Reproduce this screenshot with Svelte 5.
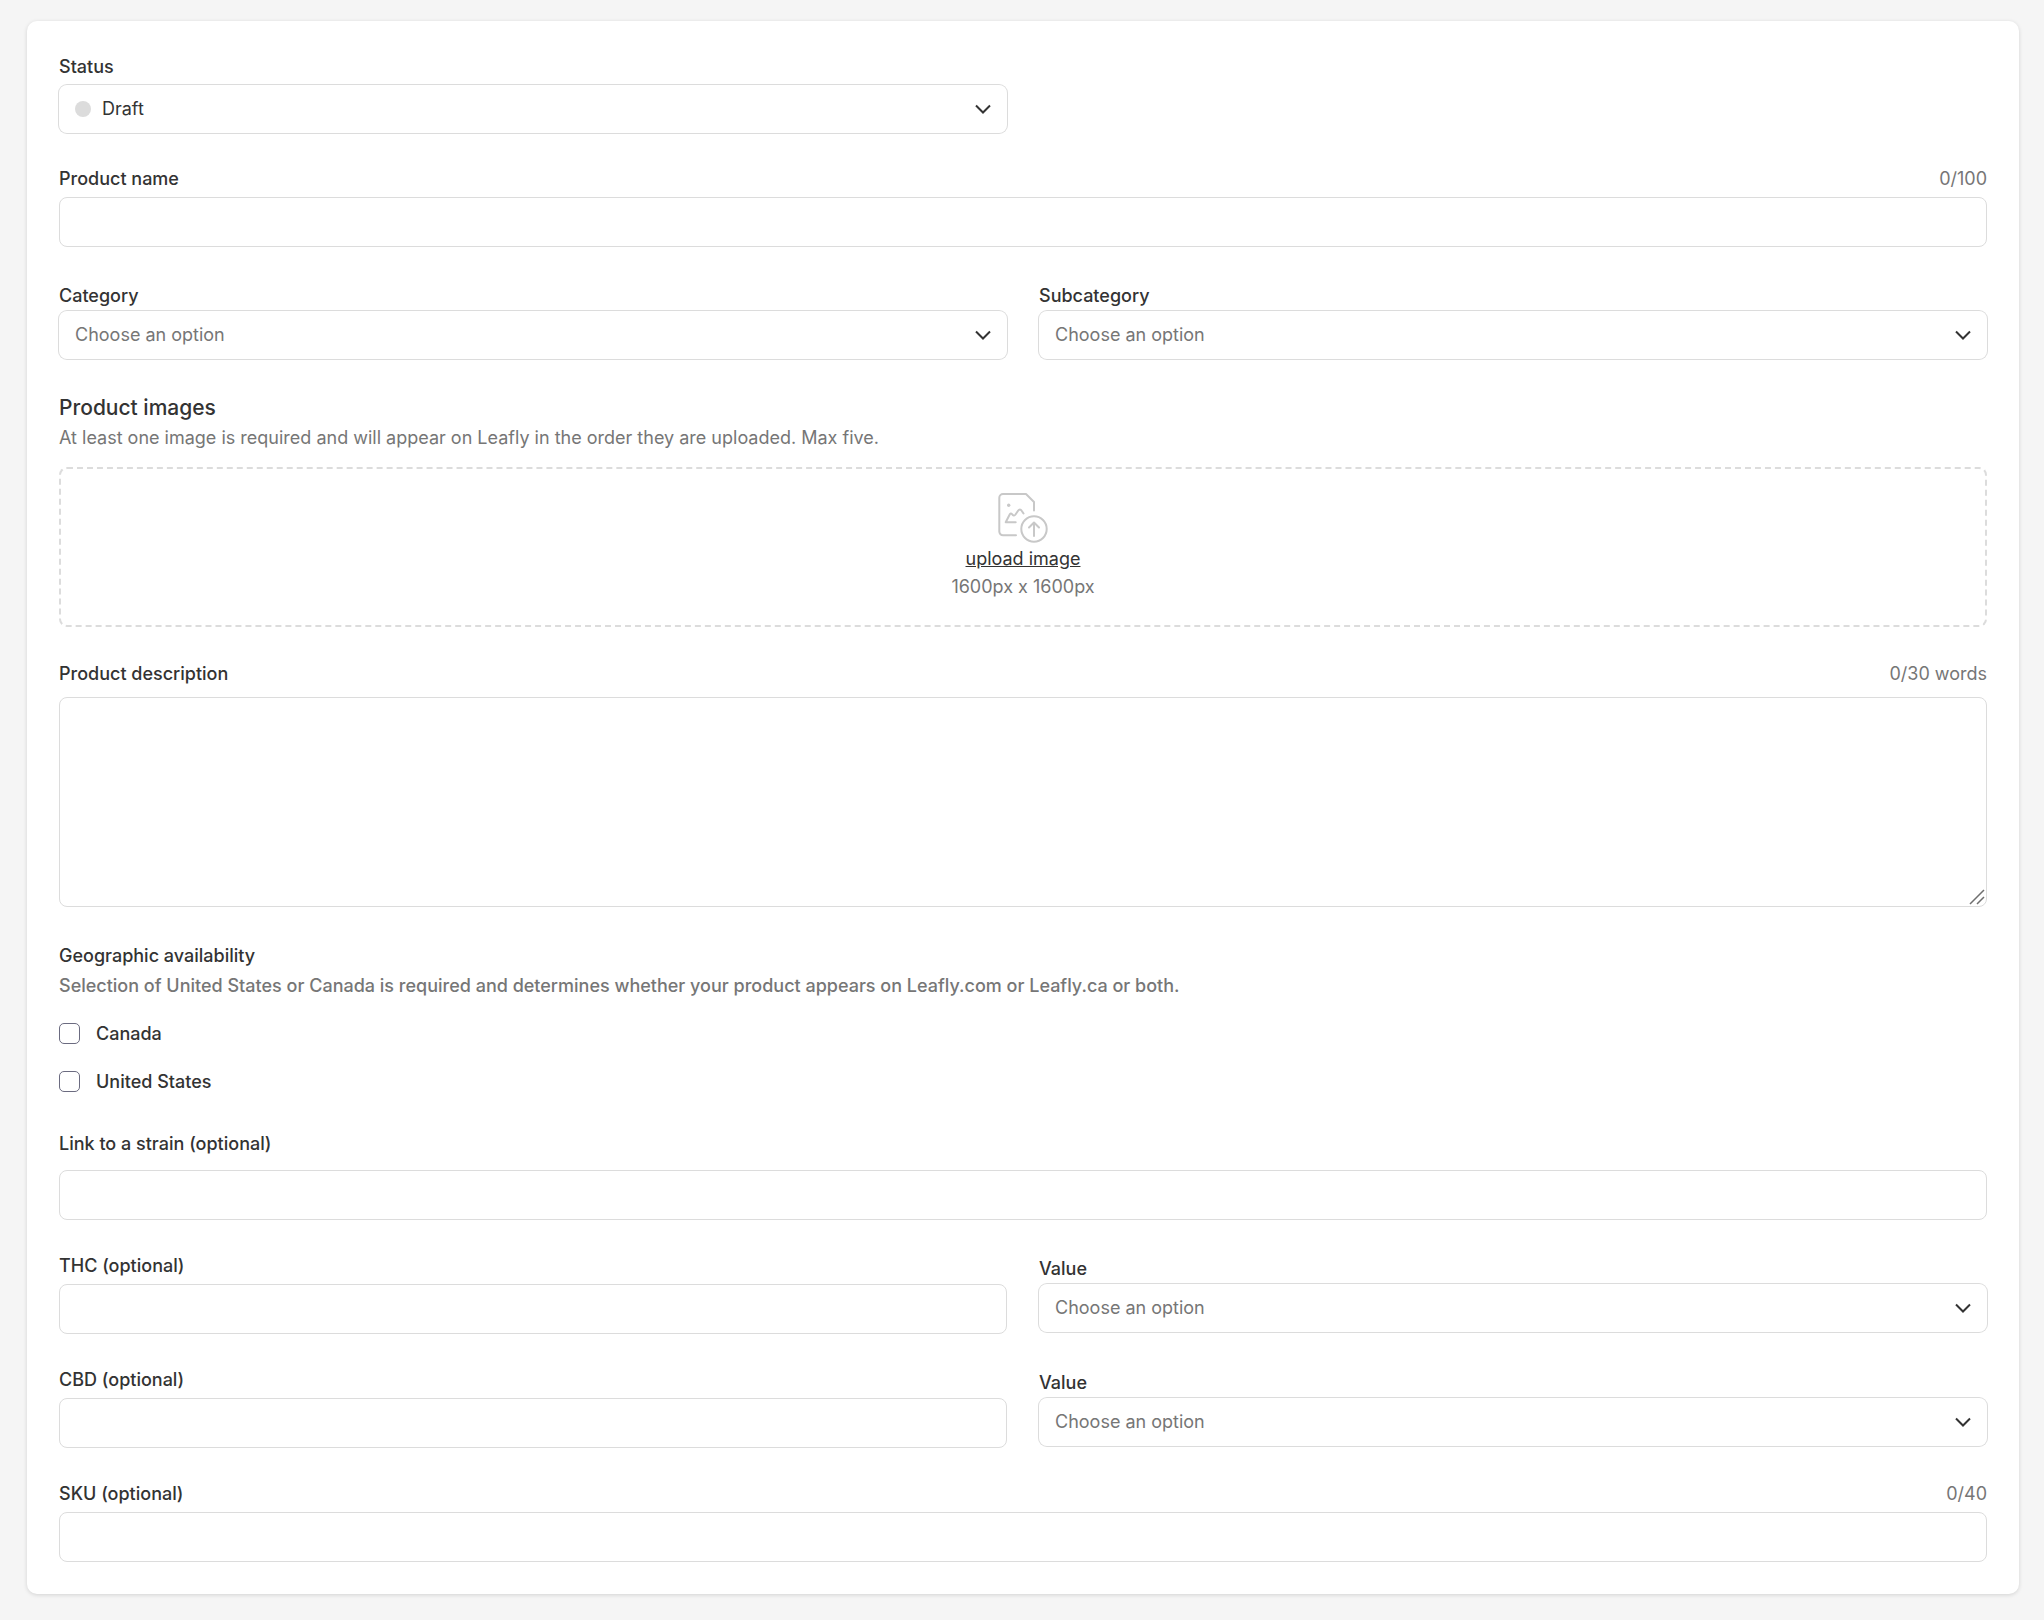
<!--
  ProductForm: create/edit form for a brand product. Holds the listing status,
  naming, category, images, description, availability and potency fields.
-->
<script lang="ts">
	const NAME_MAX = 100;
	const DESCRIPTION_MAX_WORDS = 30;
	const SKU_MAX = 40;

	const statuses = ['Draft', 'Published'];
	const units = ['%', 'mg'];
	const countries = ['Canada', 'United States'];
	const categories: Record<string, string[]> = {
		Flower: ['Pre-rolls', 'Infused flower'],
		Edibles: ['Gummies', 'Chocolates', 'Beverages'],
		Concentrates: ['Live resin', 'Rosin']
	};

	let product = $state({
		status: 'Draft',
		name: '',
		category: '',
		subcategory: '',
		description: '',
		countries: [] as string[],
		strain: '',
		thc: '',
		thcUnit: '',
		cbd: '',
		cbdUnit: '',
		sku: ''
	});
	let fileInput: HTMLInputElement;

	const subcategories = $derived(categories[product.category] ?? []);
	const wordCount = $derived(product.description.split(/\s+/).filter(Boolean).length);
</script>

{#snippet chevron()}
	<svg class="chevron" viewBox="0 0 24 24" aria-hidden="true">
		<path d="M5 8.500l7 7 7-7" />
	</svg>
{/snippet}

<form class="card" onsubmit={(event) => event.preventDefault()}>
	<div class="row">
		<div class="field">
			<label for="status">Status</label>
			<div class="select has-dot">
				<span class="status-dot" class:live={product.status === 'Published'}></span>
				<select id="status" class="chosen" bind:value={product.status}>
					{#each statuses as status}
						<option value={status}>{status}</option>
					{/each}
				</select>
				{@render chevron()}
			</div>
		</div>
	</div>

	<div class="field">
		<div class="label-row">
			<label for="name">Product name</label>
			<span class="counter">{product.name.length}/{NAME_MAX}</span>
		</div>
		<input id="name" type="text" maxlength={NAME_MAX} bind:value={product.name} />
	</div>

	<div class="row">
		<div class="field compact">
			<label for="category">Category</label>
			<div class="select">
				<select
					id="category"
					class:chosen={product.category}
					bind:value={product.category}
					onchange={() => (product.subcategory = '')}
				>
					<option value="">Choose an option</option>
					{#each Object.keys(categories) as category}
						<option value={category}>{category}</option>
					{/each}
				</select>
				{@render chevron()}
			</div>
		</div>
		<div class="field compact">
			<label for="subcategory">Subcategory</label>
			<div class="select">
				<select id="subcategory" class:chosen={product.subcategory} bind:value={product.subcategory}>
					<option value="">Choose an option</option>
					{#each subcategories as subcategory}
						<option value={subcategory}>{subcategory}</option>
					{/each}
				</select>
				{@render chevron()}
			</div>
		</div>
	</div>

	<section>
		<h2>Product images</h2>
		<p class="help">
			At least one image is required and will appear on Leafly in the order they are uploaded. Max five.
		</p>
		<div class="dropzone">
			<svg class="upload-icon" viewBox="0 0 50 52" aria-hidden="true">
				<path d="M18 42.300H5a3.700 3.700 0 0 1-3.700-3.700V4.700A3.700 3.700 0 0 1 5 1h23l8 8v8.500" />
				<path d="M17.700 29.300H7.700l4-7.800c.6-1.200 1.500-1.300 2.300-.4 1.200 1.500 2.400 1.900 3.500.4l2.700-4c1-1.500 2.500-1.500 3.300 0l2 3" />
				<circle cx="36" cy="36" r="12.700" />
				<path d="M36 43V29.500M31 34.500l5-5 5 5" />
				<circle class="sun" cx="10.700" cy="12.300" r="1.700" />
			</svg>
			<button type="button" class="upload" onclick={() => fileInput.click()}>upload image</button>
			<input bind:this={fileInput} type="file" accept="image/*" multiple hidden />
			<span class="dimensions">1600px x 1600px</span>
		</div>
	</section>

	<div class="field roomy">
		<div class="label-row">
			<label for="description">Product description</label>
			<span class="counter">{wordCount}/{DESCRIPTION_MAX_WORDS} words</span>
		</div>
		<div class="textarea">
			<textarea id="description" bind:value={product.description}></textarea>
			<svg class="grip" viewBox="0 0 16 16" aria-hidden="true">
				<path d="M1 15L15 1M8 15l7-7" />
			</svg>
		</div>
	</div>

	<fieldset>
		<legend>Geographic availability</legend>
		<p class="help strong">
			Selection of United States or Canada is required and determines whether your product appears on
			Leafly.com or Leafly.ca or both.
		</p>
		<div class="checks">
			{#each countries as country}
				<label class="check">
					<input type="checkbox" value={country} bind:group={product.countries} />
					{country}
				</label>
			{/each}
		</div>
	</fieldset>

	<div class="field roomy">
		<label class="tall" for="strain">Link to a strain (optional)</label>
		<input id="strain" type="text" bind:value={product.strain} />
	</div>

	<div class="row">
		<div class="field">
			<label for="thc">THC (optional)</label>
			<input id="thc" type="text" bind:value={product.thc} />
		</div>
		<div class="field compact">
			<label for="thc-unit">Value</label>
			<div class="select">
				<select id="thc-unit" class:chosen={product.thcUnit} bind:value={product.thcUnit}>
					<option value="">Choose an option</option>
					{#each units as unit}
						<option value={unit}>{unit}</option>
					{/each}
				</select>
				{@render chevron()}
			</div>
		</div>
	</div>

	<div class="row">
		<div class="field">
			<label for="cbd">CBD (optional)</label>
			<input id="cbd" type="text" bind:value={product.cbd} />
		</div>
		<div class="field compact">
			<label for="cbd-unit">Value</label>
			<div class="select">
				<select id="cbd-unit" class:chosen={product.cbdUnit} bind:value={product.cbdUnit}>
					<option value="">Choose an option</option>
					{#each units as unit}
						<option value={unit}>{unit}</option>
					{/each}
				</select>
				{@render chevron()}
			</div>
		</div>
	</div>

	<div class="field">
		<div class="label-row">
			<label for="sku">SKU (optional)</label>
			<span class="counter">{product.sku.length}/{SKU_MAX}</span>
		</div>
		<input id="sku" type="text" maxlength={SKU_MAX} bind:value={product.sku} />
	</div>
</form>

<style>
	:global(body) {
		background: #f5f5f5;
	}

	.card {
		--ink: #333;
		--muted: #767676;
		--line: #dcdcdc;
		display: flex;
		flex-direction: column;
		gap: 32px;
		margin: 21px 25px 26px 27px;
		padding: 32px;
		border-radius: 10px;
		background: #fff;
		box-shadow: 0 1px 4px rgba(0, 0, 0, 0.14);
		font-family: Inter, sans-serif;
		font-size: 18px;
		line-height: 27px;
		color: var(--ink);
	}

	.row {
		display: grid;
		grid-template-columns: 1fr 1fr;
		align-items: start;
		gap: 32px;
	}

	.field {
		display: flex;
		flex-direction: column;
		gap: 5px;
	}

	.field.compact {
		gap: 2px;
		padding-top: 3px;
	}

	.field.roomy {
		gap: 9px;
	}

	.label-row {
		display: flex;
		justify-content: space-between;
	}

	.roomy .label-row {
		line-height: 29px;
	}

	label,
	legend {
		font-weight: 500;
	}

	legend,
	.tall {
		line-height: 34px;
	}

	.counter,
	.dimensions {
		color: var(--muted);
	}

	/* ── Controls ─────────────────────────────────── */
	input[type='text'],
	textarea {
		box-sizing: border-box;
		width: 100%;
		height: 50px;
		margin: 0;
		padding: 0 16px;
		border: 1px solid var(--line);
		border-radius: 8px;
		background: #fff;
		font: inherit;
		color: inherit;
	}

	.textarea {
		position: relative;
	}

	textarea {
		display: block;
		height: 210px;
		padding: 12px 16px;
		resize: vertical;
	}

	textarea::-webkit-resizer {
		background: transparent;
	}

	.grip {
		position: absolute;
		right: 2px;
		bottom: 2px;
		width: 16px;
		height: 16px;
		fill: none;
		stroke: #6f6f6f;
		stroke-width: 1.5;
		pointer-events: none;
	}

	.select {
		position: relative;
	}

	select {
		appearance: none;
		display: block;
		width: 100%;
		height: 48px;
		padding: 0 48px 2px 16px;
		border: 0;
		border-radius: 8px;
		background: #fff;
		box-shadow: 0 0 0 1px var(--line);
		font: inherit;
		color: var(--muted);
	}

	select.chosen {
		color: var(--ink);
	}

	.has-dot select {
		padding-left: 43px;
	}

	.status-dot {
		position: absolute;
		top: 16px;
		left: 16px;
		width: 16px;
		height: 16px;
		border-radius: 50%;
		background: var(--line);
		pointer-events: none;
	}

	.status-dot.live {
		background: #034c46;
	}

	.chevron {
		position: absolute;
		top: 12px;
		right: 12px;
		width: 24px;
		height: 24px;
		fill: none;
		stroke: var(--ink);
		stroke-width: 2;
		pointer-events: none;
	}

	/* ── Images ───────────────────────────────────── */
	h2 {
		margin: 0;
		font-size: 21px;
		font-weight: 500;
		line-height: 34px;
	}

	.help {
		margin: 0;
		line-height: 26px;
		color: var(--muted);
	}

	.help.strong {
		font-weight: 500;
	}

	.dropzone {
		box-sizing: border-box;
		display: flex;
		flex-direction: column;
		align-items: center;
		justify-content: center;
		height: 160px;
		margin-top: 16px;
		border: 2px dashed var(--line);
		border-radius: 8px;
		line-height: 28px;
	}

	.upload-icon {
		width: 50px;
		height: 52px;
		fill: none;
		stroke: #c8c8c8;
		stroke-width: 2;
		stroke-linecap: round;
		stroke-linejoin: round;
	}

	.upload-icon .sun {
		fill: #c8c8c8;
		stroke: none;
	}

	.upload {
		padding: 0;
		border: 0;
		background: none;
		font: inherit;
		color: inherit;
		text-decoration: underline;
		cursor: pointer;
	}

	/* ── Availability ─────────────────────────────── */
	fieldset {
		min-width: 0;
		margin: 0;
		padding: 0;
		border: 0;
	}

	legend {
		padding: 0;
	}

	.checks {
		display: flex;
		flex-direction: column;
		align-items: flex-start;
		gap: 21px;
		margin-top: 21px;
	}

	.check {
		display: flex;
		align-items: center;
		gap: 16px;
	}

	input[type='checkbox'] {
		appearance: none;
		width: 21px;
		height: 21px;
		margin: 0;
		border: 1px solid #6b6b80;
		border-radius: 5px;
		background: #fff;
	}

	input[type='checkbox']:checked {
		background: #034c46;
	}
</style>
